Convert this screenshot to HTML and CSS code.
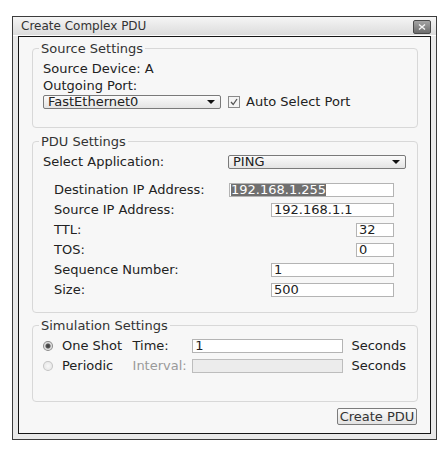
FILE: index.html
```html
<!DOCTYPE html>
<html>
<head>
<meta charset="utf-8">
<title>Create Complex PDU</title>
<link rel="stylesheet" href="styles.css">
</head>
<body>
<div class="window">
  <div class="titlebar">
    <span class="title">Create Complex PDU</span>
    <span class="close"><svg width="8" height="6" viewBox="0 0 8 6"><path d="M1 0.5 L7 5.5 M7 0.5 L1 5.5" stroke="#f2f2f2" stroke-width="1.4"/></svg></span>
  </div>
  <div class="content">
    <fieldset class="group g1">
      <legend>Source Settings</legend>
      <div class="line">Source Device: A</div>
      <div class="line">Outgoing Port:</div>
      <div class="port-row">
        <div class="select port"><span>FastEthernet0</span><span class="arrow"></span></div>
        <span class="check"><svg width="10" height="10" viewBox="0 0 10 10"><path d="M2 5 L4.2 7.5 L8 2" fill="none" stroke="#555" stroke-width="1.3"/></svg></span>
        <span class="check-label">Auto Select Port</span>
      </div>
    </fieldset>

    <fieldset class="group g2">
      <legend>PDU Settings</legend>
      <div class="row app-row">
        <span>Select Application:</span>
        <div class="select app"><span>PING</span><span class="arrow"></span></div>
      </div>
      <div class="params">
        <div class="row"><span>Destination IP Address:</span><span class="field w-long"><span class="sel">192.168.1.255</span></span></div>
        <div class="row"><span>Source IP Address:</span><span class="field w-mid">192.168.1.1</span></div>
        <div class="row"><span>TTL:</span><span class="field w-short">32</span></div>
        <div class="row"><span>TOS:</span><span class="field w-short">0</span></div>
        <div class="row"><span>Sequence Number:</span><span class="field w-mid">1</span></div>
        <div class="row"><span>Size:</span><span class="field w-mid">500</span></div>
      </div>
    </fieldset>

    <fieldset class="group g3">
      <legend>Simulation Settings</legend>
      <div class="row sim-row">
        <span class="radio on"></span>
        <span class="opt">One Shot</span>
        <span class="key">Time:</span>
        <span class="field w-sim">1</span>
        <span class="unit">Seconds</span>
      </div>
      <div class="row sim-row">
        <span class="radio"></span>
        <span class="opt">Periodic</span>
        <span class="key muted">Interval:</span>
        <span class="field w-sim disabled"></span>
        <span class="unit">Seconds</span>
      </div>
    </fieldset>

    <div class="actions">
      <span class="button">Create PDU</span>
    </div>
  </div>
</div>
</body>
</html>
```

FILE: styles.css
```css
* { box-sizing: border-box; }

body {
  margin: 0;
  background: #ffffff;
  font-family: "DejaVu Sans", Verdana, sans-serif;
  font-size: 13px;
  color: #222;
}

.window {
  margin: 16px 0 0 12px;
  width: 425px;
  border: 1px solid #3c3c3c;
  background: #e9e9e9;
  padding: 0 5px 5px;
}

.titlebar {
  height: 19px;
  margin: 0 -5px;
  padding: 3px 5px 0 8px;
  display: flex;
  align-items: flex-start;
  justify-content: space-between;
  background: linear-gradient(#f5f5f5, #dcdcdc);
  border-bottom: 1px solid #fdfdfd;
}

.title {
  font-size: 12px;
  line-height: 13px;
  color: #333;
}

.close {
  width: 18px;
  height: 14px;
  border: 1px solid #4a4a4a;
  border-radius: 2px;
  background: linear-gradient(#a4a4a4, #6c6c6c);
  display: flex;
  align-items: center;
  justify-content: center;
}

.content {
  height: 398px;
  border: 1px solid #151515;
  background: #f7f7f7;
  padding: 5px 12px 0 13px;
}

.group {
  margin: 0;
  min-width: 0;
  border: 1px solid #d8d8d8;
  border-radius: 4px;
}

.group legend {
  font-size: 13px;
  line-height: 13px;
  padding: 0 2px;
  margin-left: -4px;
  color: #333;
}

.g1 { padding: 5px 11px 18px 10px; }
.g2 { margin-top: 7px; padding: 7px 11px 15px 10px; }
.g3 { margin-top: 6px; padding: 7px 11px 28px 10px; }

.line { line-height: 17px; }

.port-row {
  margin-top: 1px;
  display: flex;
  align-items: center;
  height: 14px;
}

.select {
  height: 14px;
  display: flex;
  align-items: center;
  justify-content: space-between;
  border: 1px solid #7a7a7a;
  border-radius: 2px;
  background: linear-gradient(#fbfbfb, #e4e4e4);
  padding: 0 5px 0 4px;
  line-height: 12px;
}

.arrow {
  width: 0;
  height: 0;
  border-left: 4px solid transparent;
  border-right: 4px solid transparent;
  border-top: 4px solid #111;
}

.port { width: 178px; }
.app { width: 178px; margin-left: auto; }

.check {
  margin-left: 7px;
  width: 12px;
  height: 12px;
  border: 1px solid #8a8a8a;
  background: #f4f4f4;
  display: flex;
  align-items: center;
  justify-content: center;
}

.check-label { margin-left: 6px; line-height: 14px; }

.row {
  display: flex;
  align-items: center;
  height: 14px;
  line-height: 14px;
}

.params {
  margin: 14px 12px 0 11px;
  display: flex;
  flex-direction: column;
  gap: 6px;
}

.field {
  margin-left: auto;
  height: 14px;
  border: 1px solid #b4b4b4;
  background: #ffffff;
  padding: 0 2px;
  line-height: 12px;
  color: #222;
  white-space: nowrap;
  overflow: hidden;
}

.w-long { width: 165px; padding-left: 1px; }
.w-mid { width: 123px; }
.w-short { width: 38px; }

.sel {
  display: inline-block;
  background: #707070;
  color: #fff;
  line-height: 12px;
}

.sim-row + .sim-row { margin-top: 6px; }

.radio {
  width: 10px;
  height: 10px;
  border-radius: 50%;
  border: 1px solid #c4c4c4;
  background: radial-gradient(circle, #f8f8f8 0, #e2e2e2 100%);
  margin-right: 9px;
}

.radio.on {
  border-color: #8a8a8a;
  background: radial-gradient(circle, #3a3a3a 0, #555 2px, #d8d8d8 3px, #f0f0f0 100%);
}

.opt { width: 71px; }
.key { width: 60px; }
.muted { color: #9a9a9a; }

.w-sim { width: 152px; margin-left: 0; }
.disabled { background: #ececec; border-color: #bdbdbd; }

.unit { margin-left: 8px; }

.actions {
  margin-top: 6px;
  margin-right: 1px;
  display: flex;
  justify-content: flex-end;
}

.button {
  width: 80px;
  height: 17px;
  border: 1px solid #7c7c7c;
  border-radius: 2px;
  background: linear-gradient(#fbfbfb, #e2e2e2);
  text-align: center;
  line-height: 15px;
  color: #333;
}
```
